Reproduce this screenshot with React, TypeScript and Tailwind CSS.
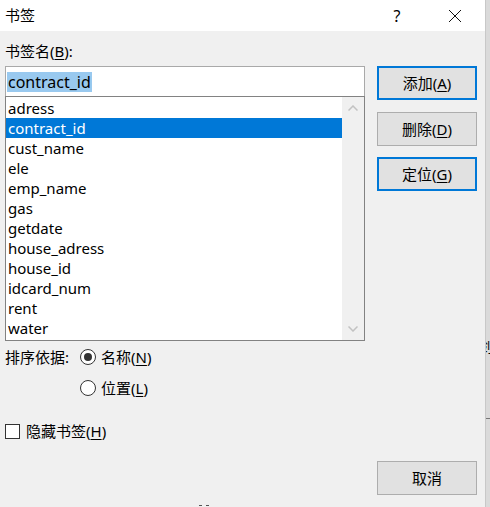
import React from 'react';

const items = [
  'adress',
  'contract_id',
  'cust_name',
  'ele',
  'emp_name',
  'gas',
  'getdate',
  'house_adress',
  'house_id',
  'idcard_num',
  'rent',
  'water',
];

const font = { fontFamily: '"Noto Sans", "Noto Sans CJK SC", sans-serif' };

function Btn({ label, k, focused }: { label: string; k?: string; focused?: boolean }) {
  return (
    <div
      className={
        'h-[34px] w-[100px] flex items-center justify-center bg-[#e1e1e1] text-[15px] text-black ' +
        (focused ? 'border-2 border-[#0078d7]' : 'border border-[#adadad]')
      }
    >
      {label}
      {k && (
        <>
          (<u className="underline-offset-2">{k}</u>)
        </>
      )}
    </div>
  );
}

function Radio({ checked }: { checked?: boolean }) {
  return (
    <span className="w-[16px] h-[16px] rounded-full border border-[#333] bg-white flex items-center justify-center shrink-0">
      {checked && <span className="w-[8px] h-[8px] rounded-full bg-[#333]" />}
    </span>
  );
}

export default function App() {
  return (
    <div className="w-[490px] h-[507px] flex overflow-hidden bg-[#f0f0f0]" style={font}>
      <div className="w-[485px] flex flex-col">
        {/* title bar */}
        <div className="h-[31px] bg-white flex items-center text-[15px] text-black">
          <span className="pl-[5px]">书签</span>
          <span className="ml-auto w-[20px] text-center mr-[41px] text-[16px]">?</span>
          <svg width="14" height="14" viewBox="0 0 14 14" className="mr-[23px]">
            <path d="M1 1 L13 13 M13 1 L1 13" stroke="#111" strokeWidth="1" />
          </svg>
        </div>

        {/* body */}
        <div className="flex-1 flex pl-[5px] gap-[12px]">
          <div className="w-[360px] flex flex-col">
            <div className="mt-[10px] h-[20px] leading-[20px] text-[15px] text-black">
              书签名(<u className="underline-offset-2">B</u>):
            </div>
            <div className="mt-[5px] h-[30px] bg-white border border-[#a9a9a9] border-b-0 flex items-center pl-[1px]">
              <span className="bg-[#99c9ef] text-black text-[16px] leading-[20px] px-[1px]">contract_id</span>
            </div>
            <div className="h-[245px] bg-white border border-[#828282] flex">
              <div className="flex-1 pt-[1px]">
                {items.map((it) => (
                  <div
                    key={it}
                    className={
                      'h-[20px] leading-[20px] text-[15px] pl-[2px] ' +
                      (it === 'contract_id' ? 'bg-[#0078d7] text-white' : 'text-black')
                    }
                  >
                    {it}
                  </div>
                ))}
              </div>
              <div className="w-[22px] bg-[#f0f0f0] flex flex-col items-center justify-between py-[8px]">
                <svg width="10" height="6" viewBox="0 0 10 6">
                  <path d="M0.5 5.5 L5 1 L9.5 5.5" stroke="#c2c2c2" strokeWidth="1.5" fill="none" />
                </svg>
                <svg width="10" height="6" viewBox="0 0 10 6">
                  <path d="M0.5 0.5 L5 5 L9.5 0.5" stroke="#c2c2c2" strokeWidth="1.5" fill="none" />
                </svg>
              </div>
            </div>

            <div className="mt-[6px] h-[20px] flex items-center text-[15px] text-black">
              <span className="w-[75px]">排序依据:</span>
              <Radio checked />
              <span className="ml-[5px]">
                名称(<u className="underline-offset-2">N</u>)
              </span>
            </div>
            <div className="mt-[11px] h-[20px] flex items-center text-[15px] text-black">
              <span className="w-[75px]" />
              <Radio />
              <span className="ml-[5px]">
                位置(<u className="underline-offset-2">L</u>)
              </span>
            </div>

            <div className="mt-[23px] h-[20px] flex items-center text-[15px] text-black">
              <span className="w-[15px] h-[15px] border border-[#333] bg-white shrink-0" />
              <span className="ml-[6px]">
                隐藏书签(<u className="underline-offset-2">H</u>)
              </span>
            </div>

            {/* specks from the window below */}
            <div className="mt-auto mb-[1px] ml-[194px] flex gap-[4px]">
              <span className="w-[3px] h-[1px] bg-[#555]" />
              <span className="w-[3px] h-[1px] bg-[#555]" />
            </div>
          </div>

          <div className="flex flex-col pb-[12px]">
            <div className="mt-[35px]">
              <Btn label="添加" k="A" focused />
            </div>
            <div className="mt-[12px]">
              <Btn label="删除" k="D" />
            </div>
            <div className="mt-[11px]">
              <Btn label="定位" k="G" focused />
            </div>
            <div className="mt-auto">
              <Btn label="取消" />
            </div>
          </div>
        </div>
      </div>

      {/* edge of the window behind */}
      <div className="w-[5px] flex flex-col bg-[#dadada] border-l border-[#c8c8c8] overflow-hidden">
        <span className="mt-[336px] ml-[-8px] text-[15px] leading-[20px] text-black">剑</span>
        <span className="mt-[62px] h-[1px] w-[4px] bg-[#777]" />
      </div>
    </div>
  );
}
